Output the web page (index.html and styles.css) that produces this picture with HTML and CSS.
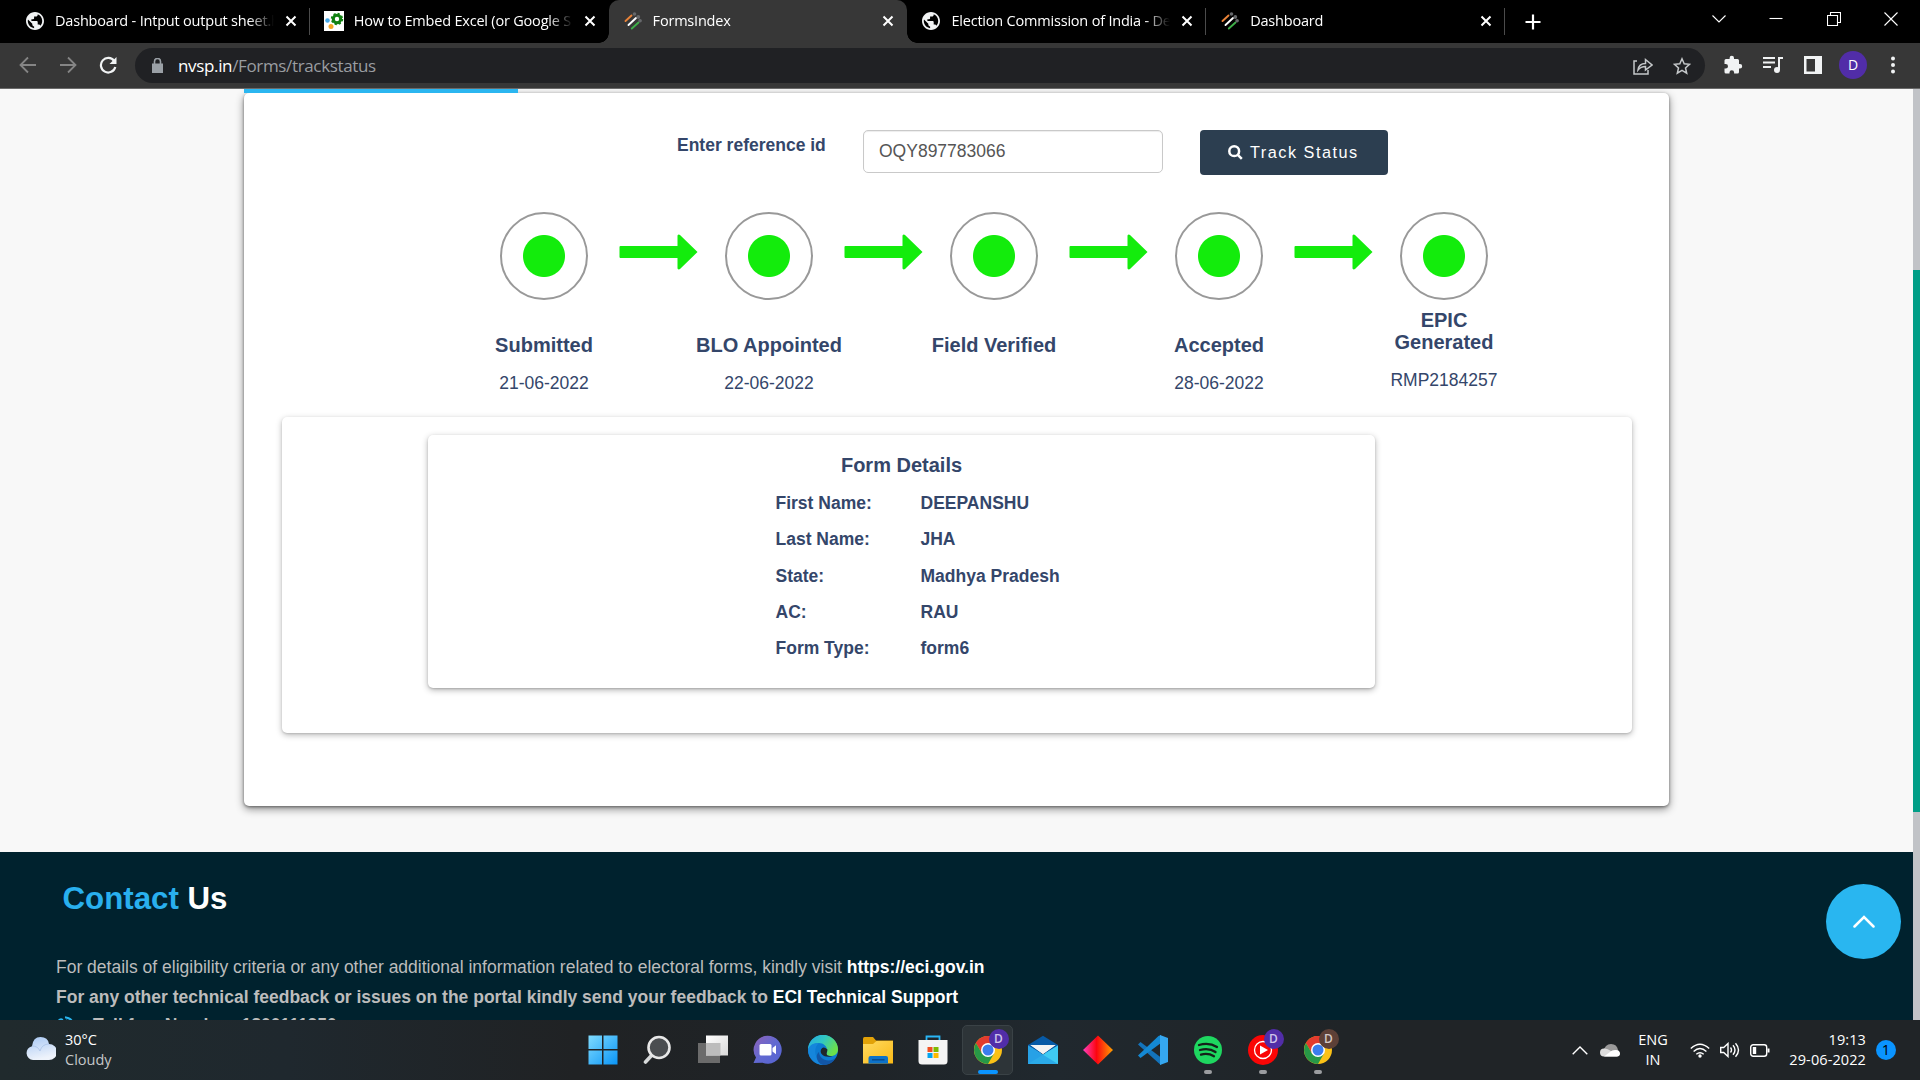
FILE: index.html
```html
<!DOCTYPE html>
<html lang="en">
<head>
<meta charset="utf-8">
<title>FormsIndex</title>
<link rel="stylesheet" href="styles.css">
</head>
<body>
<svg class="defs" width="0" height="0" aria-hidden="true">
  <defs>
    <symbol id="globe" viewBox="2 2 20 20"><path fill="#f1f3f4" d="M12 2C6.480 2 2 6.480 2 12s4.480 10 10 10 10-4.480 10-10S17.520 2 12 2zm-1 17.930c-3.950-.49-7-3.850-7-7.930 0-.62.08-1.210.21-1.790L9 15v1c0 1.100.9 2 2 2v1.930zm6.900-2.540c-.26-.81-1-1.390-1.900-1.390h-1v-3c0-.55-.45-1-1-1H8v-2h2c.55 0 1-.45 1-1V7h2c1.100 0 2-.9 2-2v-.41c2.930 1.190 5 4.060 5 7.410 0 2.080-.8 3.970-2.100 5.390z"/></symbol>
    <symbol id="eci" viewBox="0 0 18 18"><g stroke-width="1.900" stroke-linecap="round"><path d="M1.500 9l6-5.500" stroke="#e98339"/><path d="M4.500 13l7.500-7" stroke="#fff"/><path d="M7.800 16.500l6.700-6" stroke="#3fae49"/></g><g fill="#66686b"><circle cx="10.500" cy="2" r="1.800"/><circle cx="14.300" cy="5" r="1.900"/><circle cx="16.100" cy="8.700" r="1.800"/></g></symbol>
    <symbol id="x" viewBox="0 0 12 12"><path d="M1.500 1.500l9 9M10.500 1.500l-9 9" stroke="#fff" stroke-width="2"/></symbol>
    <symbol id="arrow" viewBox="0 0 78 36"><path d="M1 12h57V1.500q1-1.500 2.500-.5L78 18 60.500 35q-1.500 1-2.500-.5V24H1q-1 0-1-1V13q0-1 1-1z" fill="#13ec0c"/></symbol>
    <symbol id="chrome" viewBox="0 0 28 28"><circle cx="14" cy="14" r="14" fill="#fbc116"/><path d="M14 14L1.900 7A14 14 0 0 1 26.100 7z" fill="#e33b2e"/><path d="M14 7h12.100A14 14 0 0 0 1.900 7L8 17.500z" fill="#e33b2e"/><path d="M1.900 7A14 14 0 0 0 14 28l6-10.500-6-3.500-6 3.500z" fill="#279847"/><circle cx="14" cy="14" r="7" fill="#fff"/><circle cx="14" cy="14" r="5.500" fill="#3b7ded"/></symbol>
    <linearGradient id="g-win" x1="0" y1="0" x2="1" y2="1"><stop stop-color="#80dcff"/><stop offset="1" stop-color="#0a94f5"/></linearGradient>
    <linearGradient id="g-chat" x1="0" y1="0" x2="1" y2="1"><stop stop-color="#8f62b8"/><stop offset=".5" stop-color="#6269d1"/><stop offset="1" stop-color="#5463d2"/></linearGradient>
    <linearGradient id="g-edge" x1="0" y1="0" x2="1" y2=".5"><stop stop-color="#24a9e6"/><stop offset=".5" stop-color="#31c7c3"/><stop offset="1" stop-color="#6be04b"/></linearGradient>
    <linearGradient id="g-fold" x1="0" y1="0" x2="1" y2="1"><stop stop-color="#ffda60"/><stop offset="1" stop-color="#fab916"/></linearGradient>
    <linearGradient id="g-dia"><stop stop-color="#ff3fc0"/><stop offset=".45" stop-color="#fb0510"/><stop offset="1" stop-color="#ffa000"/></linearGradient>
    <linearGradient id="g-cloud" x1="0" y1="0" x2="0.300" y2="1"><stop stop-color="#a8c8f4"/><stop offset="1" stop-color="#eef3fb"/></linearGradient>
    <linearGradient id="g-white" x1="0" y1="0" x2="1" y2="1"><stop stop-color="#fff"/><stop offset="1" stop-color="#d9d9d9"/></linearGradient>
  </defs>
</svg>

<header class="browser">
  <div class="tabs">
    <div class="tab"><svg class="fav"><use href="#globe"/></svg><span class="title">Dashboard - Intput output sheet.h</span><svg class="tab-x"><use href="#x"/></svg></div>
    <div class="tab plain"><svg class="fav big" viewBox="0 0 20 20"><path fill="#fff" d="M0 0h20v20H0z"/><circle cx="13" cy="8" r="3.700" fill="none" stroke="#118011" stroke-width="3"/><circle cx="13" cy="8" r="5.300" fill="none" stroke="#118011" stroke-width="1.800" stroke-dasharray="2.160 2"/><circle cx="3.500" cy="9.500" r="2.300" fill="#45a9e8"/><circle cx="7" cy="15.500" r="2.500" fill="#f5a623"/></svg><span class="title">How to Embed Excel (or Google S</span><svg class="tab-x"><use href="#x"/></svg></div>
    <div class="tab active"><svg class="fav"><use href="#eci"/></svg><span class="title">FormsIndex</span><svg class="tab-x"><use href="#x"/></svg></div>
    <div class="tab"><svg class="fav"><use href="#globe"/></svg><span class="title">Election Commission of India - De</span><svg class="tab-x"><use href="#x"/></svg></div>
    <div class="tab"><svg class="fav"><use href="#eci"/></svg><span class="title">Dashboard</span><svg class="tab-x"><use href="#x"/></svg></div>
    <svg class="new-tab" viewBox="0 0 16 16"><path d="M8 .5v15M.5 8h15" stroke="#fff" stroke-width="2.200"/></svg>
    <div class="window-controls">
      <svg viewBox="0 0 14 14"><path d="M.5 3.500L7 10l6.500-6.500"/></svg>
      <svg viewBox="0 0 14 14"><path d="M.5 6.500h13"/></svg>
      <svg viewBox="0 0 14 14"><path d="M.5 3.500h10v10H.5zM3.500 3V.5h10v10H11"/></svg>
      <svg viewBox="0 0 14 14"><path d="M.5.5l13 13M13.500.5l-13 13"/></svg>
    </div>
  </div>
  <div class="toolbar">
    <svg class="nav dim" viewBox="0 0 18 18"><path d="M17 9H2M9 1.500L1.500 9 9 16.500"/></svg>
    <svg class="nav dim" viewBox="0 0 18 18"><path d="M1 9h15M9 1.500L16.500 9 9 16.500"/></svg>
    <svg class="nav" viewBox="0 0 18 18"><path d="M15.200 5A7.300 7.300 0 1 0 16.300 11" stroke-width="2.200"/><path d="M17.500 1v7h-7z" fill="#f1f3f4" stroke="none"/></svg>
    <div class="omnibox">
      <svg class="lock" viewBox="0 0 11 15"><path d="M0 5.500h11V15H0z" fill="#9aa0a6"/><path d="M2.500 6V3.500a3 3 0 0 1 6 0V6" fill="none" stroke="#9aa0a6" stroke-width="1.600"/></svg>
      <span class="url"><b>nvsp.in</b>/Forms/trackstatus</span>
      <svg class="share" viewBox="0 0 20 18"><path d="M4 4H1v13h14v-4M5 13c.5-4 3-6.500 7.500-6.500V2.500L19 8l-6.500 5V9.500C9 9.500 7 10.500 5 13z"/></svg>
      <svg class="star" viewBox="0 0 18 18"><path d="M9 1.800l2.200 5 5.300.5-4 3.600 1.200 5.300L9 13.400l-4.700 2.800 1.200-5.300-4-3.600 5.300-.5z"/></svg>
    </div>
    <div class="actions">
      <svg viewBox="0 0 20 20"><path fill="#f1f3f4" d="M17 9h-1V5.500Q16 4 14.500 4H11V3a2.200 2.200 0 0 0-4.400 0v1H3Q1.500 4 1.500 5.500V9h1.200a2.300 2.300 0 0 1 0 4.600H1.500V17q0 1.500 1.500 1.500h3.500v-1a2.300 2.300 0 0 1 4.600 0v1h3.400q1.500 0 1.500-1.500v-3.600h1a2.200 2.200 0 0 0 0-4.400z"/></svg>
      <svg viewBox="0 0 20 20"><g fill="none" stroke="#f1f3f4" stroke-width="2"><path d="M0 3h12M0 7.500h12M0 12h8M16 15V3h4"/></g><circle cx="14" cy="15" r="3" fill="#f1f3f4"/></svg>
      <svg viewBox="0 0 20 20"><path fill="#f1f3f4" fill-rule="evenodd" d="M1 1h18v18H1zM3.500 4v12.500h8.500V4z"/></svg>
      <span class="avatar">D</span>
      <svg viewBox="0 0 20 20" fill="#f1f3f4"><circle cx="10" cy="3.500" r="2"/><circle cx="10" cy="10" r="2"/><circle cx="10" cy="16.500" r="2"/></svg>
    </div>
  </div>
</header>

<div class="viewport">
  <main class="page">
    <div class="tab-strip"></div>
    <section class="card">
      <form class="search">
        <label for="ref">Enter reference id</label>
        <input id="ref" type="text" value="OQY897783066">
        <button type="button"><svg viewBox="0 0 15 15"><circle cx="6.200" cy="6.200" r="4.900"/><path d="M9.800 9.800l4 4"/></svg>Track Status</button>
      </form>
      <div class="steps">
        <div class="step"><i class="ring"></i><h4>Submitted</h4><p>21-06-2022</p></div>
        <svg class="arrow"><use href="#arrow"/></svg>
        <div class="step"><i class="ring"></i><h4>BLO Appointed</h4><p>22-06-2022</p></div>
        <svg class="arrow"><use href="#arrow"/></svg>
        <div class="step"><i class="ring"></i><h4>Field Verified</h4><p></p></div>
        <svg class="arrow"><use href="#arrow"/></svg>
        <div class="step"><i class="ring"></i><h4>Accepted</h4><p>28-06-2022</p></div>
        <svg class="arrow"><use href="#arrow"/></svg>
        <div class="step two-line"><i class="ring"></i><h4>EPIC<br>Generated</h4><p>RMP2184257</p></div>
      </div>
      <div class="panel">
        <div class="details">
          <h4>Form Details</h4>
          <dl>
            <dt>First Name:</dt><dd>DEEPANSHU</dd>
            <dt>Last Name:</dt><dd>JHA</dd>
            <dt>State:</dt><dd>Madhya Pradesh</dd>
            <dt>AC:</dt><dd>RAU</dd>
            <dt>Form Type:</dt><dd>form6</dd>
          </dl>
        </div>
      </div>
    </section>
    <footer class="contact">
      <h2><span>Contact</span> Us</h2>
      <p>For details of eligibility criteria or any other additional information related to electoral forms, kindly visit <b>https://eci.gov.in</b></p>
      <p class="strong">For any other technical feedback or issues on the portal kindly send your feedback to <b>ECI Technical Support</b></p>
      <p class="strong phone"><svg viewBox="0 0 18 18"><path d="M1 5q3-4 6-2l1 3-2 2q1 3 4 4l2-2 3 1q2 3-2 6Q2 15 1 5z" fill="#29b6f0"/><path d="M10 4.500q3 .5 3.500 3.500M9 1.200q7 .8 8 7" fill="none" stroke="#29b6f0" stroke-width="2"/></svg>Toll free Number: 1800111950</p>
    </footer>
    <a class="to-top"><svg viewBox="0 0 22 13"><path d="M1.500 11.500L11 2l9.500 9.500"/></svg></a>
  </main>
  <div class="scrollbar"><div class="thumb"></div></div>
</div>

<div class="taskbar">
  <div class="weather">
    <svg viewBox="0 0 30 24"><path d="M7 24a7 7 0 0 1-1-13.800Q7 1 14.500 1T23 8a8 8 0 0 1 0 16z" fill="url(#g-cloud)"/><path d="M6 10q6 0 8 5 2-7 9-7" fill="none" stroke="#9fb9e3" stroke-width="1" opacity=".6"/></svg>
    <div><span>30°C</span><span class="muted">Cloudy</span></div>
  </div>
  <div class="apps">
    <div class="app"><svg viewBox="0 0 30 30"><path fill="url(#g-win)" d="M.5.5H14V14H.5zM15.500.5H29.500V14H15.500zM.5 15.500H14v14H.5zM15.500 15.500h14v14h-14z"/></svg></div>
    <div class="app"><svg viewBox="0 0 30 30"><path d="M9 20l-6.500 7" stroke="#d8dadb" stroke-width="3.600" stroke-linecap="round"/><circle cx="16" cy="12.500" r="10.500" fill="#4a4d50" stroke="#e8e8e8" stroke-width="2.600"/></svg></div>
    <div class="app"><svg viewBox="0 0 30 30"><path fill="#6b6b6b" d="M0 8h22v20H0z"/><path fill="url(#g-white)" d="M8 .5h22v20H8z"/><path fill="#bcbcbc" d="M8 8h14.500v12.500H8z"/></svg></div>
    <div class="app"><svg viewBox="0 0 30 30"><path d="M14.500 .8a14 14 0 1 1-5 27L.5 28l2.500-5.500A14 14 0 0 1 14.500 .8z" fill="url(#g-chat)"/><rect x="6.500" y="9" width="12" height="11.500" rx="1.500" fill="#fff"/><path d="M19.500 13l3.500-2.800v9L19.500 16.500z" fill="#fff"/></svg></div>
    <div class="app"><svg viewBox="0 0 30 30"><circle cx="15" cy="15" r="15" fill="#0c7bd2"/><path d="M0 15A15 15 0 0 1 30 14.500c0 4-3 6.500-7 6.500-5 0-5-2.500-4-4C20 12 16 8 11 8 5 8 1 12 0 15z" fill="url(#g-edge)"/><path d="M0 15C1 10 6 7.500 10.500 8.500 7 11 6 18 9 23c2 4 6 6.500 9 6.500A15 15 0 0 1 0 15z" fill="#1586dc"/><path d="M11 17c0 5 5 9 10 8.500 2.500 0 5-1 6.500-2.500-3 5.500-8 7.500-12.500 7-5-1-9-9-4-13z" fill="#1256a6"/><path d="M19.500 14.500q-4.500-4-6.500 0c-2 5 5 9.500 13 6-3 1-9 1-7-3.500z" fill="#20262b"/></svg></div>
    <div class="app"><svg viewBox="0 0 30 30"><path d="M0 4Q0 2 1.500 2H10l3 3.500h17V12H0z" fill="#e2a208"/><path d="M0 9h10l3.500-3H30v22.500H0z" fill="url(#g-fold)"/><path d="M5.500 28.500V23q0-2 2-2h15.500q2 0 2 2v5.500z" fill="#0d72c9"/><path d="M9 24.800h12.500" stroke="#08488a" stroke-width="1.400"/></svg></div>
    <div class="app"><svg viewBox="0 0 30 30"><path d="M8.500 6V1.500h13V6" fill="none" stroke="#29b6f6" stroke-width="1.800"/><path d="M.5 5h29v21q0 3.500-3.500 3.500H4Q.5 29.500.5 26z" fill="#f4f4f4"/><path fill="#f05022" d="M9.500 12h5v5h-5z"/><path fill="#7fba00" d="M15.500 12h5v5h-5z"/><path fill="#03a4ef" d="M9.500 18h5v5h-5z"/><path fill="#ffb901" d="M15.500 18h5v5h-5z"/></svg></div>
    <div class="app current"><svg class="round"><use href="#chrome"/></svg><span class="badge">D</span></div>
    <div class="app"><svg viewBox="0 0 30 30"><path d="M0 10L15 .8 30 10v8H0z" fill="#075aa6"/><path d="M0 10.500V29h30V10.500L15 19.500z" fill="#2fa5e6"/><path d="M2.500 10h25L15 19z" fill="#f3f3f3"/><path d="M0 29l30-18.500V29z" fill="#3fcbf3"/><path d="M0 10.500L30 29H0z" fill="#26a0e6" opacity=".75"/><path d="M2.500 10h25L15 19z" fill="#f3f3f3"/></svg></div>
    <div class="app"><svg viewBox="0 0 30 30"><path d="M15 .5L30 15 15 29.500 0 15z" fill="url(#g-dia)"/></svg></div>
    <div class="app"><svg viewBox="0 0 30 30"><path d="M0 9.500L2.500 7 23 22.500V30L20.500 28z" fill="#1373bb"/><path d="M0 20.500L2.500 23 23 8V0l-2.500 1z" fill="#1489d4"/><path d="M22 0l8 3v24l-8 3z" fill="#35a7f0"/></svg></div>
    <div class="app running"><svg class="round" viewBox="0 0 28 28"><circle cx="14" cy="14" r="14" fill="#1ed760"/><path d="M5 9q10-3 18 2M6 14q9-2.500 15.500 2M7 18.600q7-2 13 1.600" fill="none" stroke="#15201a" stroke-width="2.300" stroke-linecap="round"/></svg></div>
    <div class="app running"><svg viewBox="0 0 30 30"><circle cx="15" cy="15" r="15" fill="#fa0606"/><circle cx="15" cy="15" r="8.500" fill="none" stroke="#fff" stroke-width="1.300"/><path d="M12 10.500l8 4.500-8 4.500z" fill="#fff"/></svg><span class="badge">D</span></div>
    <div class="app running"><svg class="round"><use href="#chrome"/></svg><span class="badge brown">D</span></div>
  </div>
  <div class="tray">
    <svg class="chev" viewBox="0 0 16 9"><path d="M.7 8.300L8 1l7.300 7.300"/></svg>
    <svg class="onedrive" viewBox="0 0 20 14"><path d="M3 9Q5 1 11 1t7 6z" fill="#9a9a9a"/><path d="M4 13.500a4 4 0 0 1 0-8q3-.5 7 2.500l6-1a3.300 3.300 0 0 1-.5 6.500z" fill="#ddd"/><path d="M4 13.500l8-6q7-1.500 8 2.800 0 3.200-3 3.200z" fill="#fff"/></svg>
    <div class="lang">ENG<br>IN</div>
    <svg class="wifi" viewBox="0 0 20 15"><path d="M.8 5.500Q10-3.200 19.200 5.500M3.600 8.500q6.400-5.800 12.800 0M6.300 11.300q3.700-3.300 7.400 0"/><circle cx="10" cy="13" r="1.700" fill="#fff" stroke="none"/></svg>
    <svg class="sound" viewBox="0 0 20 16"><path d="M.7 5.500h3L8 1.500v13l-4.300-4h-3zM10.500 5.500q2 2.500 0 5M13 3.300q4 4.700 0 9.400M15.500 1.200q6 6.800 0 13.600"/></svg>
    <svg class="battery" viewBox="0 0 20 13"><rect x=".7" y=".7" width="16" height="11.600" rx="2.500"/><path d="M2.800 3h3.400v7H2.800z" fill="#fff" stroke="none"/><path d="M18.500 4.500v4" stroke-width="2"/></svg>
    <div class="clock">19:13<br>29-06-2022</div>
    <span class="count">1</span>
  </div>
</div>
</body>
</html>
```
FILE: styles.css
```css
* { box-sizing: border-box; }
body {
  margin: 0;
  width: 1920px;
  height: 1080px;
  overflow: hidden;
  display: flex;
  flex-direction: column;
  font-family: "Liberation Sans", Arial, sans-serif;
  font-size: 17.5px;
  color: #34466a;
}
svg { display: block; flex: none; }
.defs { position: absolute; }
h2, h4, p, dl, dd { margin: 0; }

/* Browser chrome */
.browser {
  flex: none;
  height: 89px;
  font-family: "Segoe UI", "Open Sans", sans-serif;
  background: #373737;
  border-bottom: 1px solid #6a6a6a;
}
.tabs {
  display: flex;
  align-items: center;
  height: 43px;
  padding-left: 11px;
  background: #000;
}
.tab {
  position: relative;
  display: flex;
  align-items: center;
  width: 298.8px;
  height: 43px;
  padding: 0 12px 1px 15px;
  border-image: linear-gradient(#0000 9px, #4b4b4b 9px, #4b4b4b 34px, #0000 34px) 1;
  border-right: 1px solid;
  color: #fff;
  font-size: 14.5px;
}
.tab.plain, .tab.active { border-image: none; border-right-color: transparent; }
.tab.active { background: #373737; border-radius: 10px 10px 0 0; border-right: 0; padding-right: 13px; }
.tab.active::before, .tab.active::after {
  content: "";
  position: absolute;
  bottom: 0;
  width: 10px;
  height: 10px;
}
.tab.active::before { left: -10px; background: radial-gradient(circle at 0 0, #000 9.5px, #373737 10px); }
.tab.active::after { right: -10px; background: radial-gradient(circle at 100% 0, #000 9.5px, #373737 10px); }
.fav { width: 18px; height: 18px; margin-right: 11px; }
.fav.big { width: 20px; height: 20px; margin: 0 10px 0 -1px; }
.title {
  flex: 1;
  min-width: 0;
  overflow: hidden;
  white-space: nowrap;
  letter-spacing: -0.2px;
  margin: 0 8px 2px 0;
  mask-image: linear-gradient(90deg, #000 calc(100% - 28px), transparent calc(100% - 3px));
}
.tab-x { width: 12px; height: 12px; }
.new-tab { width: 16px; height: 16px; margin-left: 20px; }
.window-controls { display: flex; gap: 43.300px; margin: 0 22px 6px auto; }
.window-controls svg { width: 14px; height: 14px; fill: none; stroke: #fff; stroke-width: 1.1; }
.toolbar {
  display: flex;
  align-items: center;
  height: 45px;
  padding-left: 19px;
}
.nav { width: 18px; height: 18px; margin: 0 22px 2px 0; fill: none; stroke: #f1f3f4; stroke-width: 1.8; }
.nav.dim { stroke: #858585; }
.omnibox {
  display: flex;
  align-items: center;
  width: 1570px;
  height: 35px;
  margin-left: -4px;
  padding: 0 14px 0 17px;
  border-radius: 18px;
  background: #202124;
}
.lock { width: 11px; height: 15px; margin-right: 15px; }
.url { flex: 1; color: #9a9da1; font-size: 17px; letter-spacing: -0.35px; }
.url b { color: #fff; font-weight: 400; }
.share, .star { width: 20px; height: 18px; fill: none; stroke: #c4c7c9; stroke-width: 1.5; }
.star { width: 18px; margin-left: 20px; }
.actions { display: flex; align-items: center; gap: 20px; margin: 0 0 2px 18px; }
.actions svg { width: 20px; height: 20px; }
.avatar {
  display: grid;
  place-items: center;
  width: 28px;
  height: 28px;
  margin: 0 -4px;
  border-radius: 50%;
  background: #512da8;
  color: #fff;
  font-size: 14px;
}

/* Page */
.viewport { display: flex; flex: none; height: 931px; }
.page { position: relative; width: 1913px; overflow: hidden; background: #f8f8f8; }
.scrollbar { width: 7px; padding-top: 181px; background: #c1c3c7; }
.thumb { height: 542px; background: #009e87; }
.tab-strip { position: relative; z-index: 1; width: 274px; height: 4px; margin-left: 244px; background: #2bb6f0; }
.card {
  width: 1425px;
  height: 713px;
  margin-left: 244px;
  padding: 37px 37px 0 38px;
  border-radius: 5px;
  background: #fff;
  box-shadow: 0 3px 8px rgba(0, 0, 0, .45), 0 1px 3px rgba(0, 0, 0, .4);
}
.search { display: flex; align-items: flex-start; margin-left: 395px; }
.search label { width: 186px; padding-top: 5px; font-weight: 700; line-height: 20px; }
.search input {
  width: 300px;
  height: 43px;
  padding: 0 15px;
  border: 1px solid #c9c9c9;
  border-radius: 5px;
  box-shadow: inset 0 1px 1px rgba(0, 0, 0, .075);
  font: 17.5px "Liberation Sans", Arial, sans-serif;
  color: #555;
}
.search button {
  display: flex;
  align-items: center;
  width: 188px;
  height: 45px;
  margin-left: 37px;
  padding: 0 0 0 28px;
  border: 0;
  border-radius: 4px;
  background: #2c3e50;
  color: #fff;
  font: 16.25px "Liberation Sans", Arial, sans-serif;
  letter-spacing: 1.5px;
}
.search button svg { width: 15px; height: 15px; margin-right: 7px; fill: none; stroke: #fff; stroke-width: 2.5; }
.steps { display: flex; height: 205px; margin: 37px 0 0 187px; }
.step {
  display: flex;
  flex-direction: column;
  align-items: center;
  width: 150px;
  white-space: nowrap;
}
.ring {
  width: 88px;
  height: 88px;
  border: 2px solid #999;
  border-radius: 50%;
  background: radial-gradient(circle, #13ec0c 20.5px, #fff 21.5px);
}
.step h4 { margin-top: 34px; font-size: 20px; line-height: 22px; text-align: center; }
.step p { margin-top: 17px; line-height: 20px; }
.two-line h4 { margin-top: 9px; }
.arrow { width: 79px; height: 36px; margin: 22px -4px 0 0; }
.panel {
  width: 1350px;
  height: 316px;
  padding: 18px 0 0 146px;
  border-radius: 5px;
  box-shadow: 0 2px 6px rgba(0, 0, 0, .28), 0 1px 2px rgba(0, 0, 0, .12);
}
.details {
  width: 947px;
  height: 253px;
  padding-top: 18px;
  border-radius: 5px;
  box-shadow: 0 2px 6px rgba(0, 0, 0, .3), 0 1px 2px rgba(0, 0, 0, .15);
}
.details h4 { font-size: 20px; line-height: 24px; text-align: center; }
.details dl {
  display: grid;
  grid-template-columns: 145px 1fr;
  grid-auto-rows: 36.300px;
  margin: 8px 0 0 347.500px;
  font-weight: 700;
  line-height: 36.300px;
}
.contact {
  height: 190px;
  margin-top: 46px;
  padding: 29px 56px 0;
  background: #00222e;
  color: #bcbcbc;
}
.contact h2 { margin: 0 0 35px 6.500px; color: #fff; font-size: 31.25px; line-height: 36px; }
.contact h2 span { color: #29b0ee; }
.contact p { line-height: 30px; }
.contact b { color: #fff; }
.strong { font-weight: 700; }
.contact .phone { display: flex; align-items: center; gap: 19px; margin-top: -2px; }
.phone svg { width: 18px; height: 18px; }
.to-top {
  position: absolute;
  left: 1826px;
  top: 795px;
  display: grid;
  place-items: center;
  width: 75px;
  height: 75px;
  border-radius: 50%;
  background: #29b6f0;
}
.to-top svg { width: 22px; height: 13px; fill: none; stroke: #fff; stroke-width: 2.5; stroke-linecap: round; }

/* Taskbar */
.taskbar {
  display: flex;
  flex: none;
  height: 60px;
  background: linear-gradient(90deg, #202a2d, #1f282e 15%, #202224 30%, #1f2428 45%, #20282e 55%, #202427 70%, #202427);
  color: #fff;
  font-family: "Segoe UI", "Open Sans", sans-serif;
  font-size: 14.5px;
  line-height: 20px;
  letter-spacing: 0;
}
.weather { display: flex; align-items: center; gap: 9px; width: 575px; padding-left: 26px; }
.weather svg { width: 30px; height: 24px; margin-top: -5px; }
.weather span { display: block; }
.weather .muted { color: #c5c7c9; }
.apps { display: flex; }
.app { position: relative; display: grid; place-items: center; width: 55px; height: 60px; }
.app svg { width: 30px; height: 30px; }
.app svg.round { width: 28px; height: 28px; }
.current::before {
  content: "";
  position: absolute;
  inset: 5px 2px;
  border: 1px solid #3a4246;
  border-radius: 5px;
  background: #2d3438;
}
.current svg { position: relative; }
.current::after, .running::after {
  content: "";
  position: absolute;
  left: 24px;
  bottom: 6px;
  width: 8px;
  height: 4px;
  border-radius: 2px;
  background: #9b9da0;
}
.current::after { left: 18px; width: 20px; background: #0a94ff; }
.badge {
  position: absolute;
  left: 28.500px;
  top: 9px;
  width: 20px;
  height: 20px;
  border-radius: 50%;
  background: #512da8;
  color: #cfc4ea;
  font-size: 12px;
  font-weight: 600;
  text-align: center;
}
.badge.brown { background: #5d4037; color: #d5cac6; }
.tray { display: flex; align-items: center; flex: 1; padding-left: 227px; }
.tray svg { fill: none; stroke: #fff; stroke-width: 1.4; }
.chev { width: 16px; height: 9px; }
.tray .onedrive { width: 20px; height: 14px; margin-left: 12px; stroke: none; }
.lang { width: 40px; margin: 0 17px 0 13px; text-align: center; }
.wifi { width: 20px; height: 15px; }
.sound { width: 20px; height: 16px; margin: 0 10px; }
.battery { width: 20px; height: 13px; }
.clock { width: 96px; text-align: right; letter-spacing: 0.1px; }
.count {
  width: 20px;
  height: 20px;
  margin-left: 10px;
  border-radius: 50%;
  background: #0a94ff;
  color: #000;
  text-align: center;
}
```
